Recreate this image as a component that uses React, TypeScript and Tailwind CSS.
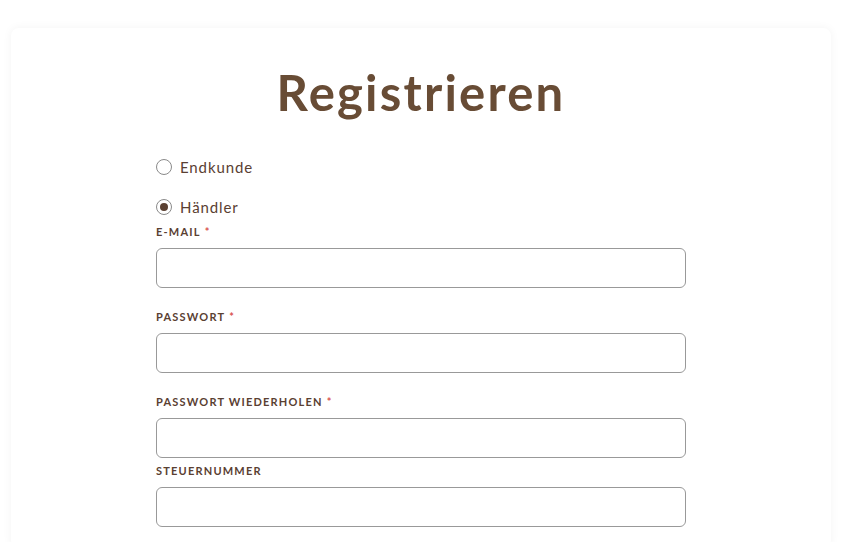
import React from 'react';

const fields = [
  { label: 'E-Mail', required: true, type: 'email' },
  { label: 'Passwort', required: true, type: 'password' },
  { label: 'Passwort wiederholen', required: true, type: 'password' },
  { label: 'Steuernummer', required: false, type: 'text' },
];

const App = () => {
  const [kind, setKind] = React.useState('haendler');

  return (
    <div className="min-h-screen bg-white pt-7 pl-[11px] pr-[15px] font-['Lato',sans-serif] text-[#5a4032]">
      <div className="bg-white rounded-lg shadow-[0_0_10px_rgba(0,0,0,0.05)] min-h-[520px] pt-[35px]">
        <h1 className="text-center text-[49px] leading-[58px] font-bold tracking-[2.2px] text-[#684c35]">Registrieren</h1>

        <form className="w-[530px] mx-auto mt-[36px]">
          <div className="flex flex-col gap-[20px]">
            {[
              { id: 'endkunde', label: 'Endkunde' },
              { id: 'haendler', label: 'Händler' },
            ].map((opt) => (
              <label key={opt.id} className="flex items-center gap-2 text-[15px] leading-5 tracking-[0.9px] cursor-pointer">
                <span className="w-4 h-4 rounded-full border border-[#8a8a8a] flex items-center justify-center">
                  {kind === opt.id && <span className="w-2 h-2 rounded-full bg-[#5a4032]" />}
                </span>
                <input
                  type="radio"
                  name="kind"
                  className="hidden"
                  checked={kind === opt.id}
                  onChange={() => setKind(opt.id)}
                />
                {opt.label}
              </label>
            ))}
          </div>

          <div className="mt-[7px]">
            {fields.map((f, i) => (
              <div key={f.label} className={i < 2 ? 'mb-[21px]' : 'mb-[5px]'}>
                <div className="text-[11px] leading-4 font-bold uppercase tracking-[1.2px] mb-[8px]">
                  {f.label}
                  {f.required && <span className="text-[#d9534f] ml-1">*</span>}
                </div>
                <input
                  type={f.type}
                  className="w-full h-10 rounded-md border border-[#999] px-3 outline-none"
                />
              </div>
            ))}
          </div>
        </form>
      </div>
    </div>
  );
};

export default App;
